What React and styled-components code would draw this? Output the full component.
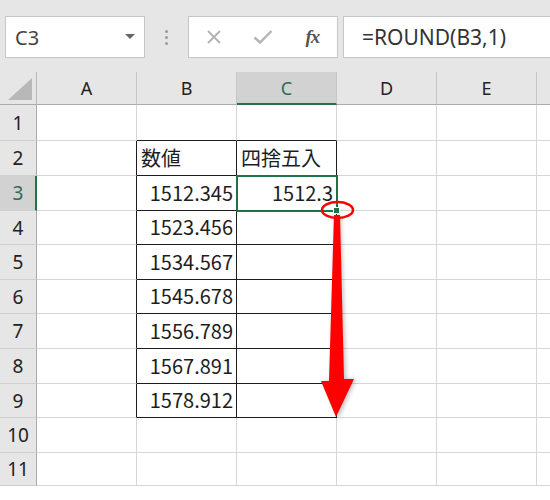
import React from "react";
import styled, { createGlobalStyle } from "styled-components";

const Global = createGlobalStyle`
  html, body { margin: 0; padding: 0; background: #ffffff; }
  body { width: 550px; height: 500px; overflow: hidden; font-family: "Noto Sans", "Noto Sans CJK JP", sans-serif; }
`;

const Page = styled.div`
  position: relative;
  width: 550px;
  height: 500px;
  overflow: hidden;
  background: #ffffff;
`;

const Toolbar = styled.div`
  display: flex;
  align-items: flex-start;
  height: 72px;
  padding-top: 16px;
  box-sizing: border-box;
  background: #e6e6e6;
`;

const Box = styled.div`
  height: 42px;
  box-sizing: border-box;
  background: #ffffff;
  border: 1px solid #c6c6c6;
  display: flex;
  align-items: center;
`;

const NameBox = styled(Box)`
  width: 140px;
  margin-left: 5px;
  padding: 0 9px 0 9px;
  justify-content: space-between;
  font-size: 20px;
  color: #444444;
`;

const Caret = styled.span`
  width: 0;
  height: 0;
  border-left: 5px solid transparent;
  border-right: 5px solid transparent;
  border-top: 5px solid #666666;
  margin-bottom: 2px;
`;

const Dots = styled.div`
  width: 43px;
  height: 42px;
  display: flex;
  flex-direction: column;
  align-items: center;
  justify-content: center;
  gap: 3px;
`;

const Dot = styled.span`
  width: 3px;
  height: 3px;
  border-radius: 50%;
  background: #9a9a9a;
`;

const ButtonsBox = styled(Box)`
  width: 150px;
`;

const ToolButton = styled.div`
  width: 50px;
  height: 100%;
  display: flex;
  align-items: center;
  justify-content: center;
`;

const Fx = styled.span`
  font-family: "Liberation Serif", "DejaVu Serif", serif;
  font-style: italic;
  font-weight: bold;
  font-size: 19px;
  color: #555555;
  letter-spacing: -1px;
`;

const FormulaBox = styled(Box)`
  flex: 1;
  margin-left: 5px;
  border-right: none;
  padding-left: 18px;
  font-size: 21px;
  color: #333333;
`;

const Grid = styled.div`
  display: grid;
  grid-template-columns: 37px repeat(6, 100px);
  grid-template-rows: ${(p) => p.$rows};
  width: 550px;
  overflow: hidden;
`;

const Corner = styled.div`
  background: #e6e6e6;
  border-right: 1px solid #b9b9b9;
  border-bottom: 1px solid #ababab;
  box-sizing: border-box;
  display: flex;
  align-items: flex-end;
  justify-content: flex-end;
  padding: 0 4px 4px 0;
`;

const CornerTriangle = styled.div`
  width: 24px;
  height: 22px;
  background: #b8b8b8;
  clip-path: polygon(100% 0, 100% 100%, 0 100%);
`;

const ColHeader = styled.div`
  box-sizing: border-box;
  background: ${(p) => (p.$sel ? "#d2d2d2" : "#e6e6e6")};
  border-right: 1px solid #c6c6c6;
  border-bottom: ${(p) => (p.$sel ? "2px solid #217346" : "1px solid #ababab")};
  display: flex;
  align-items: center;
  justify-content: center;
  font-size: 18px;
  color: ${(p) => (p.$sel ? "#2e6b57" : "#222222")};
  padding-top: ${(p) => (p.$sel ? "1px" : "0")};
`;

const RowHeader = styled.div`
  box-sizing: border-box;
  background: ${(p) => (p.$sel ? "#d2d2d2" : "#e6e6e6")};
  border-right: ${(p) => (p.$sel ? "2px solid #217346" : "1px solid #ababab")};
  border-bottom: 1px solid #cfcfcf;
  display: flex;
  align-items: center;
  justify-content: center;
  font-size: 19px;
  color: ${(p) => (p.$sel ? "#2e6b57" : "#222222")};
  padding-left: ${(p) => (p.$sel ? "1px" : "0")};
`;

const Cell = styled.div`
  position: relative;
  box-sizing: border-box;
  background: #ffffff;
  border-right: 1px solid ${(p) => (p.$darkRight ? "#1c1c1c" : "#d6d6d6")};
  border-bottom: 1px solid ${(p) => (p.$darkBottom ? "#1c1c1c" : "#d6d6d6")};
  display: flex;
  align-items: center;
  justify-content: ${(p) => (p.$right ? "flex-end" : "flex-start")};
  padding: 0 ${(p) => (p.$right ? "3px" : "0")} 2px ${(p) => (p.$right ? "0" : "4px")};
  font-family: "Noto Sans CJK JP", "Noto Sans", sans-serif;
  font-size: 20px;
  color: #1e1e1e;
  white-space: nowrap;
  ${(p) =>
    p.$active &&
    `
    z-index: 2;
    outline: 2px solid #217346;
    outline-offset: -1px;
  `}
`;

const FillHandle = styled.span`
  position: absolute;
  right: -4px;
  bottom: -4px;
  width: 7px;
  height: 7px;
  box-sizing: border-box;
  background: #217346;
  border: 1px solid #ffffff;
`;

const Overlay = styled.svg`
  position: absolute;
  left: 0;
  top: 0;
  pointer-events: none;
  z-index: 5;
`;

const cols = ["A", "B", "C", "D", "E", "F"];
const rows = [
  { n: 1, h: 36, b: "", c: "" },
  { n: 2, h: 35, b: "数値", c: "四捨五入" },
  { n: 3, h: 35, b: "1512.345", c: "1512.3" },
  { n: 4, h: 34, b: "1523.456", c: "" },
  { n: 5, h: 35, b: "1534.567", c: "" },
  { n: 6, h: 34, b: "1545.678", c: "" },
  { n: 7, h: 35, b: "1556.789", c: "" },
  { n: 8, h: 35, b: "1567.891", c: "" },
  { n: 9, h: 34, b: "1578.912", c: "" },
  { n: 10, h: 35, b: "", c: "" },
  { n: 11, h: 33, b: "", c: "" },
];

const inBox = (n) => n >= 2 && n <= 9;

export default function App() {
  const rowTemplate = ["33px", ...rows.map((r) => `${r.h}px`)].join(" ");
  return (
    <Page>
      <Global />
      <Toolbar>
        <NameBox>
          <span>C3</span>
          <Caret />
        </NameBox>
        <Dots>
          <Dot />
          <Dot />
          <Dot />
        </Dots>
        <ButtonsBox>
          <ToolButton>
            <svg width="16" height="16" viewBox="0 0 16 16">
              <path d="M2 2 L14 14 M14 2 L2 14" stroke="#b4b4b4" strokeWidth="2" fill="none" />
            </svg>
          </ToolButton>
          <ToolButton>
            <svg width="20" height="16" viewBox="0 0 20 16">
              <path d="M1.5 8.5 L7 13.5 L18.5 2" stroke="#b4b4b4" strokeWidth="2.4" fill="none" />
            </svg>
          </ToolButton>
          <ToolButton>
            <Fx>fx</Fx>
          </ToolButton>
        </ButtonsBox>
        <FormulaBox>=ROUND(B3,1)</FormulaBox>
      </Toolbar>
      <Grid $rows={rowTemplate}>
        <Corner>
          <CornerTriangle />
        </Corner>
        {cols.map((c) => (
          <ColHeader key={c} $sel={c === "C"}>
            {c === "F" ? "" : c}
          </ColHeader>
        ))}
        {rows.map((r) => (
          <React.Fragment key={r.n}>
            <RowHeader $sel={r.n === 3}>{r.n}</RowHeader>
            {cols.map((c) => {
              const box = inBox(r.n) && (c === "B" || c === "C");
              const darkRight = box || (c === "A" && inBox(r.n));
              const darkBottom = box || (r.n === 1 && (c === "B" || c === "C"));
              const text = c === "B" ? r.b : c === "C" ? r.c : "";
              const right = r.n >= 3;
              const active = c === "C" && r.n === 3;
              return (
                <Cell
                  key={c}
                  $darkRight={darkRight}
                  $darkBottom={darkBottom}
                  $right={right}
                  $active={active}
                >
                  {text}
                  {active && <FillHandle />}
                </Cell>
              );
            })}
          </React.Fragment>
        ))}
      </Grid>
      <Overlay width="550" height="500" viewBox="0 0 550 500">
        <defs>
          <filter id="sh" x="-50%" y="-10%" width="200%" height="120%">
            <feGaussianBlur stdDeviation="2" />
          </filter>
        </defs>
        <polygon
          points="335,216 341,216 346,379 356,379 338,419 323,381 331,381"
          fill="#000000"
          opacity="0.25"
          filter="url(#sh)"
        />
        <polygon points="334,215 340,215 344,379 354,379 336,417 321,381 329,381" fill="#ff0000" />
        <ellipse cx="337.5" cy="210" rx="15.5" ry="8" fill="none" stroke="#ff0000" strokeWidth="2.5" />
      </Overlay>
    </Page>
  );
}
